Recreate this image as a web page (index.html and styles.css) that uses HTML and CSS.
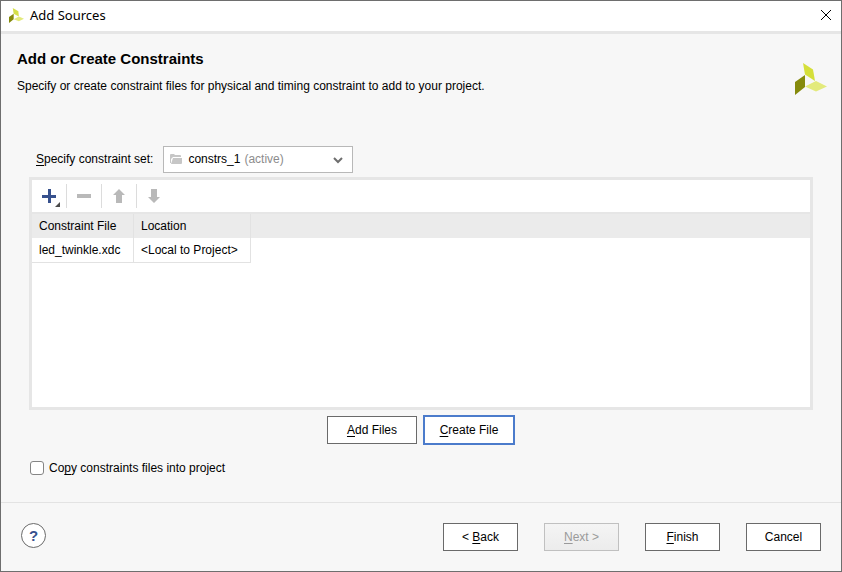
FILE: index.html
```html
<!DOCTYPE html>
<html lang="en">
<head>
<meta charset="utf-8">
<title>Add Sources</title>
<link rel="stylesheet" href="styles.css">
</head>
<body>
<div class="dialog">
  <header class="titlebar">
    <svg class="app-icon" viewBox="0 0 32 32" aria-hidden="true">
      <path fill="#d5df4a" d="M8 0 20 7 21 18 10 12Z"/>
      <path fill="#858a0c" d="M0 19 10 12V24L0 32Z"/>
      <path fill="#e3ea7c" d="M10 24 21 18 32 23 21 28Z"/>
    </svg>
    <span class="title">Add Sources</span>
    <button class="close" type="button" aria-label="Close">
      <svg viewBox="0 0 12 12" aria-hidden="true"><path d="M1 1 11 11M11 1 1 11"/></svg>
    </button>
  </header>

  <main class="content">
    <div class="intro">
      <div>
        <h1>Add or Create Constraints</h1>
        <p>Specify or create constraint files for physical and timing constraint to add to your project.</p>
      </div>
      <svg class="logo" viewBox="0 0 32 32" aria-hidden="true">
        <path fill="#d5df3a" d="M8 0 18 6.500 20 18 10 11.500Z"/>
        <path fill="#858a0c" d="M0 19 10 12V24L0 32Z"/>
        <path fill="#e3ea7c" d="M10 23.500 21 18 32 23.500 21 28.500Z"/>
      </svg>
    </div>

    <div class="set-row">
      <label for="set"><u>S</u>pecify constraint set:</label>
      <div class="combo">
        <select id="set"><option>constrs_1</option></select>
        <svg class="folder" viewBox="0 0 12 10" aria-hidden="true"><path d="M0 9V1Q0 0 1 0H4L5 1H10Q11 1 11 2V3H3L1 5V9ZM3 4H12V9Q12 10 11 10H1Z"/></svg>
        <span class="state">(active)</span>
        <svg class="chevron" viewBox="0 0 10 7" aria-hidden="true"><path d="M1 1 5 5 9 1"/></svg>
      </div>
    </div>

    <section class="panel">
      <div class="toolbar">
        <button type="button" aria-label="Add">
          <svg viewBox="0 0 24 24" aria-hidden="true"><path fill="#37518d" d="M5 11h6V5h3v6h5v3h-5v5h-3v-5H5Z"/><path fill="#4a4a4a" d="M23 18v5h-5Z"/></svg>
        </button>
        <button type="button" aria-label="Remove" disabled>
          <svg viewBox="0 0 24 24" aria-hidden="true"><path fill="#b9b9b9" d="M5 10h14v4H5Z"/></svg>
        </button>
        <button type="button" aria-label="Move up" disabled>
          <svg viewBox="0 0 24 24" aria-hidden="true"><path fill="#b9b9b9" d="M12 5 18 11H15V19H9V11H6Z"/></svg>
        </button>
        <button type="button" aria-label="Move down" disabled>
          <svg viewBox="0 0 24 24" aria-hidden="true"><path fill="#b9b9b9" d="M12 19 6 13H9V5H15V13H18Z"/></svg>
        </button>
      </div>
      <table>
        <thead><tr><th class="col-file" scope="col">Constraint File</th><th class="col-loc" scope="col">Location</th><td class="rest"></td></tr></thead>
        <tbody><tr><td>led_twinkle.xdc</td><td>&lt;Local to Project&gt;</td><td class="rest"></td></tr></tbody>
      </table>
    </section>

    <div class="file-actions">
      <button class="btn" type="button"><u>A</u>dd Files</button>
      <button class="btn primary" type="button"><u>C</u>reate File</button>
    </div>

    <label class="check"><input type="checkbox"><span>Co<u>p</u>y constraints files into project</span></label>
  </main>

  <footer class="footer">
    <button class="help" type="button" aria-label="Help">?</button>
    <div class="nav">
      <button class="btn" type="button">&lt; <u>B</u>ack</button>
      <button class="btn" type="button" disabled><u>N</u>ext &gt;</button>
      <button class="btn" type="button"><u>F</u>inish</button>
      <button class="btn" type="button">Cancel</button>
    </div>
  </footer>
</div>
</body>
</html>
```
FILE: styles.css
```css
* { box-sizing: border-box; }

body {
  margin: 0;
  font: 12px/16px "Liberation Sans", Arial, sans-serif;
  color: #000;
}

button, select, input { font: inherit; color: inherit; margin: 0; }
button { padding: 0; }
svg { display: block; }
u { text-decoration: underline; text-underline-offset: 2px; text-decoration-skip-ink: none; }

.dialog {
  display: flex;
  flex-direction: column;
  min-height: 100vh;
  background: #f7f7f7;
  border: 1px solid #6e6e6e;
}

.titlebar {
  display: flex;
  align-items: center;
  height: 33px;
  padding: 0 9px 2px 8px;
  background: #fff;
  border-bottom: 3px solid #e6e6e6;
}
.app-icon { width: 15px; height: 15px; }
.title { flex: 1; margin-left: 6px; font: 13px/18px "Noto Sans", sans-serif; }
.close { border: 0; background: none; }
.close svg { width: 12px; height: 12px; fill: none; stroke: #000; stroke-width: 1; }

.content {
  flex: 1;
  display: flex;
  flex-direction: column;
  padding: 16px 28px 26px;
}

.intro { display: flex; justify-content: space-between; margin: 0 -14px 0 -12px; }
h1 { margin: 0; font-size: 15px; line-height: 18px; }
.intro p { margin: 10px 0 0; }
.logo { width: 32px; height: 32px; margin-top: 13px; }

.set-row { display: flex; align-items: center; gap: 10px; margin: 51px 0 4px 7px; }
.set-row label { padding-bottom: 2px; }
.combo { position: relative; width: 190px; }
.combo select {
  display: block;
  width: 100%;
  height: 27px;
  padding: 0 0 2px 24px;
  appearance: none;
  background: #fff;
  border: 1px solid #b8b8b8;
  border-radius: 0;
}
.folder, .state, .chevron { position: absolute; pointer-events: none; }
.folder { left: 7px; top: 8px; width: 12px; height: 10px; fill: #c6c6c6; }
.state { left: 81px; top: 5px; color: #8c8c8c; }
.chevron { right: 10px; top: 11px; width: 10px; height: 7px; fill: none; stroke: #6e6e6e; stroke-width: 2; }

.panel { flex: 1; background: #fff; border: 3px solid #e6e6e6; }
.toolbar { display: flex; height: 34px; padding: 4px 0; border-bottom: 2px solid #e6e6e6; }
.toolbar button {
  width: 35px;
  height: 24px;
  padding: 0 5px;
  border: 0;
  border-left: 1px solid #dcdcdc;
  background: none;
}
.toolbar button:first-child { width: 34px; border-left: 0; }
.toolbar svg { width: 24px; height: 24px; }

table { width: 100%; border-collapse: separate; border-spacing: 0; table-layout: fixed; }
th, td {
  height: 25px;
  padding: 0 7px;
  border-right: 1px solid #e2e2e2;
  font-weight: normal;
  text-align: left;
  white-space: nowrap;
}
thead { background: #ebebeb; }
thead th, thead .rest { height: 24px; }
tbody td { border-bottom: 1px solid #e2e2e2; }
.col-file { width: 102px; }
.col-loc { width: 117px; }
td.rest { border: 0; }

.file-actions { display: flex; justify-content: center; align-items: center; gap: 6px; margin-top: 5px; }
.btn {
  width: 75px;
  height: 28px;
  padding-bottom: 1px;
  background: #fff;
  border: 1px solid #6a6a6a;
}
.btn:disabled { color: #9a9a9a; background: linear-gradient(#f4f4f4, #ececec); border-color: #c0c0c0; }
.file-actions .btn { width: 90px; }
.file-actions .primary { width: 92px; height: 30px; border: 2px solid #4b7bcb; }

.check { display: flex; align-items: center; align-self: flex-start; gap: 5px; margin: 15px 0 0 1px; }
.check input {
  appearance: none;
  width: 14px;
  height: 14px;
  background: #fff;
  border: 1px solid #858585;
  border-radius: 3px;
}
.check input:checked { background: #4b7bcb; }

.footer {
  display: flex;
  justify-content: space-between;
  align-items: flex-start;
  height: 69px;
  padding: 20px 20px 0;
  border-top: 1px solid #e3e3e3;
}
.nav { display: flex; gap: 26px; }
.help {
  width: 25px;
  height: 25px;
  background: #fff;
  border: 1px solid #6a6a6a;
  border-radius: 50%;
  color: #37518d;
  font-size: 15px;
  font-weight: bold;
}
```
